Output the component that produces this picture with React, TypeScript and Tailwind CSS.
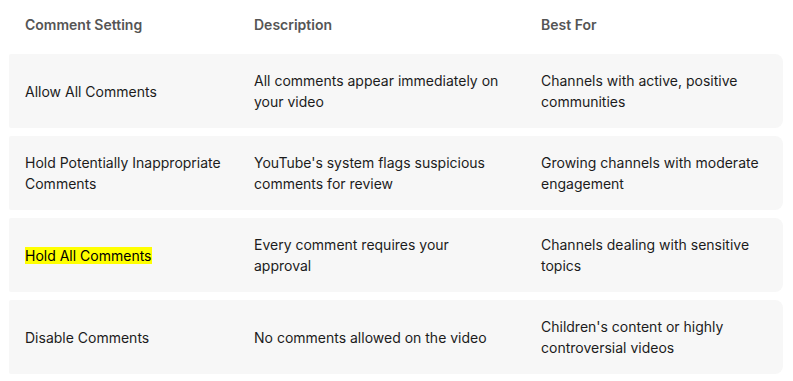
import React from "react";

type Row = { setting: string; description: string; bestFor: string; highlight?: boolean };

const rows: Row[] = [
  {
    setting: "Allow All Comments",
    description: "All comments appear immediately on your video",
    bestFor: "Channels with active, positive communities",
  },
  {
    setting: "Hold Potentially Inappropriate Comments",
    description: "YouTube's system flags suspicious comments for review",
    bestFor: "Growing channels with moderate engagement",
  },
  {
    setting: "Hold All Comments",
    description: "Every comment requires your approval",
    bestFor: "Channels dealing with sensitive topics",
    highlight: true,
  },
  {
    setting: "Disable Comments",
    description: "No comments allowed on the video",
    bestFor: "Children's content or highly controversial videos",
  },
];

export default function App() {
  return (
    <div
      className="w-[793px] h-[381px] bg-white pl-[9px] pr-[10px] text-[14px] text-[#1c1c1c]"
      style={{ fontFamily: "Inter, 'Noto Sans', sans-serif" }}
    >
      <div className="grid grid-cols-[229px_287px_258px] h-[47px] items-center text-[#555] font-semibold pt-[1px]">
        <div className="pl-4">Comment Setting</div>
        <div className="pl-4">Description</div>
        <div className="pl-4">Best For</div>
      </div>
      <div className="flex flex-col gap-2 mt-[7px]">
        {rows.map((r) => (
          <div
            key={r.setting}
            className="grid grid-cols-[229px_287px_258px] h-[74px] items-center bg-[#f7f7f7] rounded-l-[2px] rounded-r-lg leading-[21px]"
          >
            <div className="pl-4 pr-3">
              {r.highlight ? (
                <span className="bg-[#ffff00] text-black">{r.setting}</span>
              ) : (
                r.setting
              )}
            </div>
            <div className="pl-4 pr-[22px]">{r.description}</div>
            <div className="pl-4 pr-3">{r.bestFor}</div>
          </div>
        ))}
      </div>
    </div>
  );
}
